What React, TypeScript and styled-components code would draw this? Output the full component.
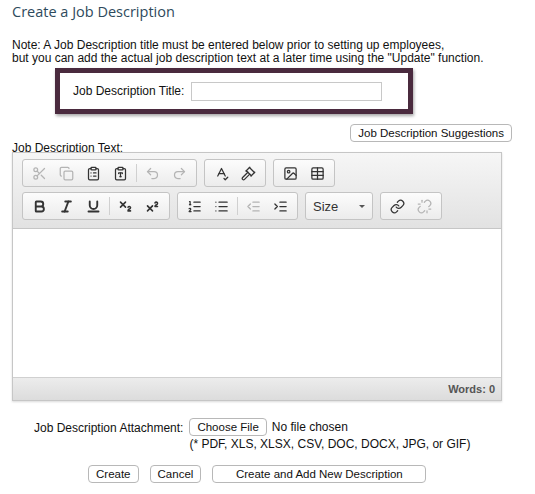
import styled, { createGlobalStyle } from "styled-components";
import {
  Scissors,
  Copy,
  ClipboardList,
  ClipboardType,
  Undo2,
  Redo2,
  SpellCheck,
  Gavel,
  Image,
  Table,
  Bold,
  Italic,
  Underline,
  Subscript,
  Superscript,
  ListOrdered,
  List,
  IndentDecrease,
  IndentIncrease,
  Link,
  Unlink,
} from "lucide-react";

const Global = createGlobalStyle`
  body { margin: 0; background: #fff; font-family: "Liberation Sans", Arial, sans-serif; font-size: 12px; color: #111; }
`;

export default function App() {
  return (
    <Page>
      <Global />
      <Heading>Create a Job Description</Heading>
      <Note>
        Note: A Job Description title must be entered below prior to setting up employees,
        <br />
        but you can add the actual job description text at a later time using the "Update" function.
      </Note>
      <TitleBox>
        <span>Job Description Title:</span>
        <TitleInput />
      </TitleBox>
      <SuggestRow>
        <Btn>Job Description Suggestions</Btn>
      </SuggestRow>
      <Label>Job Description Text:</Label>
      <Editor>
        <Toolbar>
          <Group>
            <Icon $dim><Scissors size={15} /></Icon>
            <Icon $dim><Copy size={15} /></Icon>
            <Icon><ClipboardList size={15} /></Icon>
            <Icon><ClipboardType size={15} /></Icon>
            <Sep />
            <Icon $dim><Undo2 size={15} /></Icon>
            <Icon $dim><Redo2 size={15} /></Icon>
          </Group>
          <Group>
            <Icon><SpellCheck size={15} /></Icon>
            <Icon><Gavel size={15} /></Icon>
          </Group>
          <Group>
            <Icon><Image size={15} /></Icon>
            <Icon><Table size={15} /></Icon>
          </Group>
          <Group>
            <Icon><Bold size={15} strokeWidth={3} /></Icon>
            <Icon><Italic size={15} strokeWidth={3} /></Icon>
            <Icon><Underline size={15} strokeWidth={3} /></Icon>
            <Sep />
            <Icon><Subscript size={15} strokeWidth={2.5} /></Icon>
            <Icon><Superscript size={15} strokeWidth={2.5} /></Icon>
          </Group>
          <Group>
            <Icon><ListOrdered size={15} /></Icon>
            <Icon><List size={15} /></Icon>
            <Sep />
            <Icon $dim><IndentDecrease size={15} /></Icon>
            <Icon><IndentIncrease size={15} /></Icon>
          </Group>
          <Group>
            <SizeCombo>
              <span>Size</span>
              <Caret />
            </SizeCombo>
          </Group>
          <Group>
            <Icon><Link size={15} /></Icon>
            <Icon $dim><Unlink size={15} /></Icon>
          </Group>
        </Toolbar>
        <Content />
        <Footer>Words: 0</Footer>
      </Editor>
      <AttachRow>
        <AttachLabel>Job Description Attachment:</AttachLabel>
        <div>
          <FileLine>
            <Btn>Choose File</Btn>
            <span>No file chosen</span>
          </FileLine>
          <Types>(* PDF, XLS, XLSX, CSV, DOC, DOCX, JPG, or GIF)</Types>
        </div>
      </AttachRow>
      <Actions>
        <Btn>Create</Btn>
        <Btn>Cancel</Btn>
        <Btn $wide>Create and Add New Description</Btn>
      </Actions>
    </Page>
  );
}

const Page = styled.div`
  padding: 2px 12px 0 12px;
  width: 490px;
`;

const Heading = styled.div`
  font-family: "Open Sans", sans-serif;
  font-size: 14.5px;
  color: #2e4a5c;
  height: 20px;
`;

const Note = styled.div`
  margin-top: 17px;
  line-height: 13px;
`;

const TitleBox = styled.div`
  margin: 3px 0 0 43px;
  width: 335px;
  height: 36px;
  border: 5px solid #4a2a3e;
  box-shadow: 1px 2px 3px rgba(0, 0, 0, 0.35);
  display: flex;
  align-items: center;
  gap: 7px;
  padding-left: 13px;
`;

const TitleInput = styled.div`
  width: 189px;
  height: 17px;
  border: 1px solid #c8c8c8;
`;

const SuggestRow = styled.div`
  display: flex;
  justify-content: flex-end;
  margin-top: 10px;
  margin-right: -10px;
`;

const Btn = styled.button<{ $wide?: boolean }>`
  font-family: "Liberation Sans", Arial, sans-serif;
  font-size: 11.5px;
  color: #111;
  background: #fff;
  border: 1px solid #b8b8b8;
  border-radius: 4px;
  height: 18px;
  padding: 0 7px;
  width: ${(p) => (p.$wide ? "214px" : "auto")};
`;

const Label = styled.div`
  height: 10px;
  line-height: 13px;
  overflow: visible;
`;

const Editor = styled.div`
  position: relative;
  border: 1px solid #c6c6c6;
  box-shadow: 0 1px 2px rgba(0, 0, 0, 0.15);
`;

const Toolbar = styled.div`
  background: linear-gradient(#f6f6f6, #e2e2e2);
  border-bottom: 1px solid #c6c6c6;
  padding: 6px 22px 7px 9px;
  display: flex;
  flex-wrap: wrap;
  gap: 5px 7px;
  height: 62px;
  box-sizing: content-box;
  align-content: flex-start;
`;

const Group = styled.div`
  display: flex;
  align-items: center;
  height: 26px;
  padding: 0 3px;
  border: 1px solid #c4c4c4;
  border-radius: 3px;
  background: linear-gradient(#fcfcfc, #ececec);
`;

const Icon = styled.span<{ $dim?: boolean }>`
  width: 27px;
  display: flex;
  justify-content: center;
  color: ${(p) => (p.$dim ? "#b4b4b4" : "#333")};
`;

const Sep = styled.span`
  width: 1px;
  height: 18px;
  background: #d0d0d0;
  margin: 0 2px;
`;

const SizeCombo = styled.div`
  width: 52px;
  display: flex;
  align-items: center;
  justify-content: space-between;
  padding: 0 4px;
  font-size: 13px;
  color: #333;
`;

const Caret = styled.span`
  border-left: 3px solid transparent;
  border-right: 3px solid transparent;
  border-top: 3px solid #555;
`;

const Content = styled.div`
  height: 148px;
  background: #fff;
`;

const Footer = styled.div`
  height: 22px;
  border-top: 1px solid #d0d0d0;
  background: linear-gradient(#ececec, #dcdcdc);
  display: flex;
  align-items: center;
  justify-content: flex-end;
  padding-right: 6px;
  font-size: 11px;
  font-weight: bold;
  color: #555;
`;

const AttachRow = styled.div`
  display: flex;
  gap: 6px;
  margin-top: 17px;
  padding-left: 22px;
`;

const AttachLabel = styled.div`
  padding-top: 3px;
`;

const FileLine = styled.div`
  display: flex;
  align-items: center;
  gap: 5px;
`;

const Types = styled.div`
  margin-top: 1px;
`;

const Actions = styled.div`
  display: flex;
  gap: 11px;
  margin-top: 14px;
  padding-left: 76px;
`;
